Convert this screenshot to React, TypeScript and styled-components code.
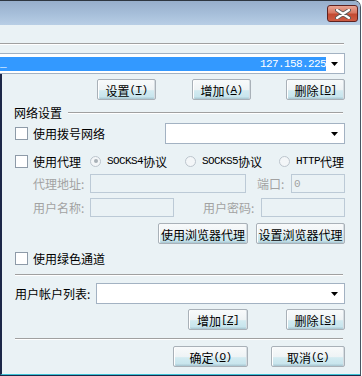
import React from "react";
import styled, { createGlobalStyle } from "styled-components";

const FONT = `"Noto Sans CJK SC", "DejaVu Sans", sans-serif`;
const MONO = `"Liberation Mono", "DejaVu Sans Mono", monospace`;
const BG = "#eaf2f5";
const DISABLED = "#a2a2a2";

const GlobalStyle = createGlobalStyle`
  html, body { margin: 0; padding: 0; background: #fff; }
  body { font-family: ${FONT}; font-size: 12px; color: #000; }
  * { box-sizing: border-box; }
`;

const Window = styled.div`
  width: 361px;
  height: 376px;
  display: flex;
  flex-direction: column;
  background: ${BG};
  border-top: 1px solid #2e3640;
  border-right: 1px solid #4a5563;
  border-bottom: 1px solid #1c2748;
  border-top-right-radius: 7px;
  overflow: hidden;
`;

const TitleBar = styled.div`
  height: 24px;
  flex: none;
  display: flex;
  justify-content: flex-end;
  align-items: flex-start;
  padding: 4px 2px 0 0;
  background: linear-gradient(to bottom, #97aecb 0%, #a7bfda 55%, #b8cee5 100%);
`;

const CloseBtn = styled.div`
  width: 31px;
  height: 17px;
  border: 1px solid #5e2220;
  border-radius: 3px;
  background: linear-gradient(to bottom, #e9a594 0%, #d87863 45%, #c34a32 55%, #cd5c44 100%);
  display: flex;
  align-items: center;
  justify-content: center;
`;

const Body = styled.div`
  flex: 1;
  display: flex;
  flex-direction: column;
  padding-right: 15px;
`;

const Separator = styled.div<{ $top: number; $left?: number; $right?: number }>`
  height: 2px;
  flex: none;
  margin-top: ${(p) => p.$top}px;
  margin-left: ${(p) => p.$left ?? 0}px;
  margin-right: ${(p) => p.$right ?? 1}px;
  border-top: 1px solid #a0a0a0;
  border-bottom: 1px solid #ffffff;
`;

// half-width latin, like the 6px ascii cells of a 12px bitmap CJK font
const Latin = styled.span`
  font-family: ${MONO};
  font-size: 11px;
  letter-spacing: -0.6px;
`;

const ArrowBox = styled.div`
  width: 18px;
  flex: none;
  display: flex;
  align-items: center;
  justify-content: center;
`;

const Arrow = () => (
  <ArrowBox>
    <svg width="8" height="5" viewBox="0 0 8 5">
      <path d="M0 0 H7 L3.5 4 Z" fill="#000" />
    </svg>
  </ArrowBox>
);

const Combo = styled.div<{ $width: number; $noLeft?: boolean }>`
  width: ${(p) => p.$width}px;
  height: 21px;
  flex: none;
  display: flex;
  align-items: stretch;
  background: #fff;
  border: 1px solid #a3b2c2;
  ${(p) => (p.$noLeft ? "border-left: none;" : "")}
  padding: 3px 0 2px 0;
`;

const ComboText = styled.div`
  flex: 1;
`;

const Selection = styled.div`
  flex: 1;
  height: 14px;
  background: #3399ff;
  color: #fff;
  display: flex;
  justify-content: space-between;
  align-items: center;
  overflow: hidden;
  white-space: nowrap;
`;

const Frame = styled.div`
  flex: 1;
  display: flex;
  flex-direction: column;
  margin-right: -15px;
  padding: 0 15px 0 13px;
  border-left: 2px solid #1c2748;
  border-bottom: 1px solid #3dc2d5;
`;

const Row = styled.div<{ $top: number; $height: number; $justify?: string; $gap?: number }>`
  display: flex;
  align-items: center;
  flex: none;
  margin-top: ${(p) => p.$top}px;
  height: ${(p) => p.$height}px;
  justify-content: ${(p) => p.$justify ?? "flex-start"};
  gap: ${(p) => p.$gap ?? 0}px;
`;

const Button = styled.div<{ $width: number }>`
  width: ${(p) => p.$width}px;
  height: 21px;
  flex: none;
  display: flex;
  align-items: center;
  justify-content: center;
  border: 1px solid #a9b1b8;
  border-radius: 2px;
  background: linear-gradient(
    to bottom,
    #f8fafb 0%,
    #eef3f5 52%,
    #d3ebf1 56%,
    #c8e5ed 88%,
    #a6c4cf 100%
  );
  box-shadow: inset 1px 0 0 #fff, inset -1px 0 0 #d6dde2;
  white-space: nowrap;
  padding-top: 1px;
`;

const GroupTitle = styled.div`
  display: flex;
  align-items: center;
  height: 14px;
  margin-top: 5px;
  margin-left: -1px;
`;

const GroupLine = styled.div`
  flex: 1;
  height: 2px;
  margin: 1px 2px 0 6px;
  border-top: 1px solid #a0a0a0;
  border-bottom: 1px solid #fff;
`;

const CheckBox = styled.div`
  width: 13px;
  height: 13px;
  flex: none;
  background: #fff;
  border: 1px solid #8e9ba8;
  margin-right: 5px;
`;

const Label = styled.span<{ $disabled?: boolean; $width?: number; $indent?: number }>`
  color: ${(p) => (p.$disabled ? DISABLED : "#000")};
  white-space: nowrap;
  flex: none;
  ${(p) => (p.$width ? `width: ${p.$width}px;` : "")}
  margin-left: ${(p) => p.$indent ?? 0}px;
`;

const RadioItem = styled.div<{ $width: number }>`
  width: ${(p) => p.$width}px;
  flex: none;
  display: flex;
  align-items: center;
  color: #000;
  white-space: nowrap;
`;

const RadioCircle = styled.div<{ $checked?: boolean }>`
  width: 11px;
  height: 11px;
  border-radius: 50%;
  border: 1px solid #bcc5cd;
  background: #f3f6f8;
  margin-right: 6px;
  display: flex;
  align-items: center;
  justify-content: center;
  &::after {
    content: "";
    display: ${(p) => (p.$checked ? "block" : "none")};
    width: 4px;
    height: 4px;
    border-radius: 50%;
    background: #a9b1b8;
  }
`;

const Input = styled.div<{ $width: number }>`
  width: ${(p) => p.$width}px;
  height: 19px;
  flex: none;
  border: 1px solid #bccad6;
  background: ${BG};
  color: ${DISABLED};
  display: flex;
  align-items: center;
  padding-left: 2px;
`;

const Spacer = styled.div`
  flex: 1;
`;

export default function App() {
  return (
    <>
      <GlobalStyle />
      <Window>
        <TitleBar>
          <CloseBtn>
            <svg width="16" height="10" viewBox="0 0 16 10">
              <path d="M2 1 L14 9 M14 1 L2 9" stroke="#5a5a5a" strokeWidth="4" strokeLinecap="round" />
              <path d="M2 1 L14 9 M14 1 L2 9" stroke="#fff" strokeWidth="2.2" strokeLinecap="round" />
            </svg>
          </CloseBtn>
        </TitleBar>
        <Body>
          <Separator $top={18} />
          <Row $top={8} $height={21}>
            <Combo $width={345} $noLeft>
              <Selection>
                <Latin>_</Latin>
                <Latin>127.158.225</Latin>
              </Selection>
              <Arrow />
            </Combo>
          </Row>
          <Frame>
            <Row $top={5} $height={21} $justify="flex-end">
              <Button $width={59}>设置<Latin>(<u>T</u>)</Latin></Button>
              <Button $width={59} style={{ marginLeft: 36 }}>增加<Latin>(<u>A</u>)</Latin></Button>
              <Button $width={59} style={{ marginLeft: 35 }}>删除<Latin>[<u>D</u>]</Latin></Button>
            </Row>

            <GroupTitle>
              网络设置
              <GroupLine />
            </GroupTitle>

            <Row $top={4} $height={21}>
              <CheckBox />
              <Label>使用拨号网络</Label>
              <Spacer />
              <Combo $width={180}>
                <ComboText />
                <Arrow />
              </Combo>
            </Row>

            <Row $top={8} $height={18}>
              <CheckBox />
              <Label $width={57}>使用代理</Label>
              <RadioItem $width={95}>
                <RadioCircle $checked />
                <Latin>SOCKS4</Latin>协议
              </RadioItem>
              <RadioItem $width={94}>
                <RadioCircle />
                <Latin>SOCKS5</Latin>协议
              </RadioItem>
              <RadioItem $width={66}>
                <RadioCircle />
                <Latin>HTTP</Latin>代理
              </RadioItem>
            </Row>

            <Row $top={4} $height={19}>
              <Label $disabled $indent={18} $width={57}>代理地址:</Label>
              <Input $width={156} />
              <Label $disabled $indent={11} $width={34}>端口:</Label>
              <Input $width={54}><Latin>0</Latin></Input>
            </Row>

            <Row $top={5} $height={19}>
              <Label $disabled $indent={18} $width={57}>用户名称:</Label>
              <Input $width={84} />
              <Label $disabled $indent={29} $width={58}>用户密码:</Label>
              <Input $width={84} />
            </Row>

            <Row $top={6} $height={21} $justify="flex-end" $gap={8}>
              <Button $width={90}>使用浏览器代理</Button>
              <Button $width={89}>设置浏览器代理</Button>
            </Row>

            <Row $top={6} $height={16}>
              <CheckBox />
              <Label>使用绿色通道</Label>
            </Row>

            <Separator $top={8} $right={2} />

            <Row $top={7} $height={21}>
              <Label $width={81}>用户帐户列表:</Label>
              <Combo $width={249}>
                <ComboText />
                <Arrow />
              </Combo>
            </Row>

            <Row $top={5} $height={21} $justify="flex-end" $gap={38}>
              <Button $width={60}>增加<Latin>[<u>Z</u>]</Latin></Button>
              <Button $width={59}>删除<Latin>[<u>S</u>]</Latin></Button>
            </Row>

            <Separator $top={8} $right={2} />

            <Row $top={6} $height={21} $justify="flex-end" $gap={23}>
              <Button $width={75}>确定<Latin>(<u>O</u>)</Latin></Button>
              <Button $width={74}>取消<Latin>(<u>C</u>)</Latin></Button>
            </Row>
          </Frame>
        </Body>
      </Window>
    </>
  );
}
